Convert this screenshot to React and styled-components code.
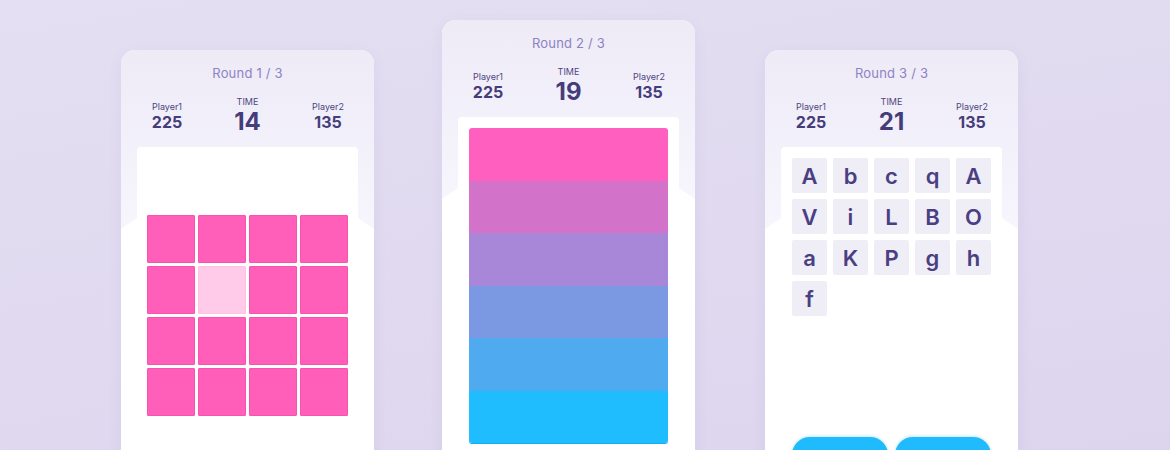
import React from "react";
import styled, { createGlobalStyle } from "styled-components";

const GlobalStyle = createGlobalStyle`
  html, body {
    margin: 0;
    padding: 0;
    height: 100%;
  }
  body {
    background: linear-gradient(170deg, #e4dff2 0%, #ddd5ee 100%);
    font-family: Inter, "Noto Sans", sans-serif;
    overflow: hidden;
  }
`;

const tiles = [
  false, false, false, false,
  false, true, false, false,
  false, false, false, false,
  false, false, false, false,
];

const stripes = ["#ff5fbe", "#d273c9", "#a886d8", "#7b98e3", "#4faaef", "#20bdfe"];

const letters = ["A", "b", "c", "q", "A", "V", "i", "L", "B", "O", "a", "K", "P", "g", "h", "f"];

const Stats = ({ round, time }) => (
  <>
    <RoundTitle>Round {round} / 3</RoundTitle>
    <StatsRow>
      <Stat>
        <StatLabel>Player1</StatLabel>
        <StatValue>225</StatValue>
      </Stat>
      <Stat>
        <StatLabel>TIME</StatLabel>
        <TimeValue>{time}</TimeValue>
      </Stat>
      <Stat>
        <StatLabel>Player2</StatLabel>
        <StatValue>135</StatValue>
      </Stat>
    </StatsRow>
  </>
);

const App = () => {
  return (
    <>
      <GlobalStyle />
      <Stage>
        <Card $top={50}>
          <Stats round={1} time={14} />
          <Panel $center>
            <TileGrid>
              {tiles.map((faded, i) => (
                <Tile key={i} $faded={faded} />
              ))}
            </TileGrid>
          </Panel>
        </Card>

        <Card $top={20}>
          <Stats round={2} time={19} />
          <Panel>
            <StripeStack>
              {stripes.map((c) => (
                <Stripe key={c} style={{ background: c }} />
              ))}
            </StripeStack>
          </Panel>
        </Card>

        <Card $top={50}>
          <Stats round={3} time={21} />
          <Panel>
            <LetterGrid>
              {letters.map((l, i) => (
                <Letter key={i}>{l}</Letter>
              ))}
            </LetterGrid>
            <ButtonRow>
              <PillButton>Reset</PillButton>
              <PillButton>Submit</PillButton>
            </ButtonRow>
          </Panel>
        </Card>
      </Stage>
    </>
  );
};

// Styled components
const Stage = styled.div`
  display: flex;
  align-items: flex-start;
  gap: 68px;
  padding-left: 121px;
  height: 450px;
  overflow: hidden;
`;

const Card = styled.div`
  position: relative;
  width: 253px;
  height: 500px;
  margin-top: ${(p) => p.$top}px;
  flex-shrink: 0;
  background: #ffffff;
  border-radius: 14px;
  box-shadow: 0 4px 14px rgba(120, 100, 180, 0.08);
  overflow: hidden;
  display: flex;
  flex-direction: column;
  align-items: stretch;

  &:last-child {
    margin-left: 2px;
  }

  &::before {
    content: "";
    position: absolute;
    inset: 0 0 auto 0;
    height: 180px;
    background: linear-gradient(180deg, #eeebf7 0%, #f4f2fb 70%, #f7f6fd 100%);
    clip-path: polygon(0 0, 100% 0, 100% 179px, calc(100% - 16px) 168px, 16px 168px, 0 179px);
  }
`;

const RoundTitle = styled.div`
  position: relative;
  margin-top: 15px;
  text-align: center;
  font-size: 13px;
  line-height: 16px;
  color: #8c83c3;
  letter-spacing: 0.2px;
`;

const StatsRow = styled.div`
  position: relative;
  display: flex;
  justify-content: space-between;
  align-items: flex-end;
  padding: 0 26px;
  margin-top: 10px;
  height: 56px;
`;

const Stat = styled.div`
  width: 40px;
  display: flex;
  flex-direction: column;
  align-items: center;
  color: #453c7a;
  padding-bottom: 16px;
`;

const StatLabel = styled.div`
  font-size: 9px;
  line-height: 11px;
  color: #4d4580;
  white-space: nowrap;
`;

const StatValue = styled.div`
  font-size: 16px;
  line-height: 18px;
  font-weight: 700;
  margin-top: 1px;
`;

const TimeValue = styled.div`
  font-size: 24px;
  line-height: 26px;
  font-weight: 700;
  margin-top: 2px;
  margin-bottom: -4px;
`;

const Panel = styled.div`
  position: relative;
  margin: 0 16px;
  height: 337px;
  box-sizing: border-box;
  padding: 11px;
  background: #ffffff;
  border-radius: 4px;
  display: flex;
  flex-direction: column;
  justify-content: ${(p) => (p.$center ? "center" : "flex-start")};
`;

const TileGrid = styled.div`
  display: grid;
  grid-template-columns: repeat(4, 48px);
  grid-auto-rows: 48px;
  gap: 3px;
  justify-content: center;
`;

const Tile = styled.div`
  background: ${(p) => (p.$faded ? "#ffcbe8" : "#ff5fb9")};
  border: 1px solid ${(p) => (p.$faded ? "#ffc2e3" : "#fa52b0")};
  border-radius: 1px;
  box-sizing: border-box;
`;

const StripeStack = styled.div`
  display: flex;
  flex-direction: column;
  height: 315px;
  border-radius: 3px;
  overflow: hidden;
  box-shadow: 0 1px 0 #14aef0;
`;

const Stripe = styled.div`
  flex: 1;
`;

const LetterGrid = styled.div`
  display: grid;
  grid-template-columns: repeat(5, 35px);
  grid-auto-rows: 35px;
  gap: 6px;
`;

const Letter = styled.div`
  display: flex;
  align-items: center;
  justify-content: center;
  background: #efedf5;
  border-radius: 2px;
  color: #4a3f82;
  font-size: 22px;
  font-weight: 600;
`;

const ButtonRow = styled.div`
  margin-top: auto;
  display: flex;
  gap: 7px;
`;

const PillButton = styled.button`
  width: 96px;
  height: 36px;
  border: none;
  border-radius: 18px;
  background: #20bbfd;
  color: #ffffff;
  font-family: Inter, "Noto Sans", sans-serif;
  font-size: 12px;
  font-weight: 600;
  text-transform: uppercase;
  padding-top: 14px;
  box-shadow: 0 -1px 3px rgba(32, 150, 220, 0.25);
`;

export default App;
